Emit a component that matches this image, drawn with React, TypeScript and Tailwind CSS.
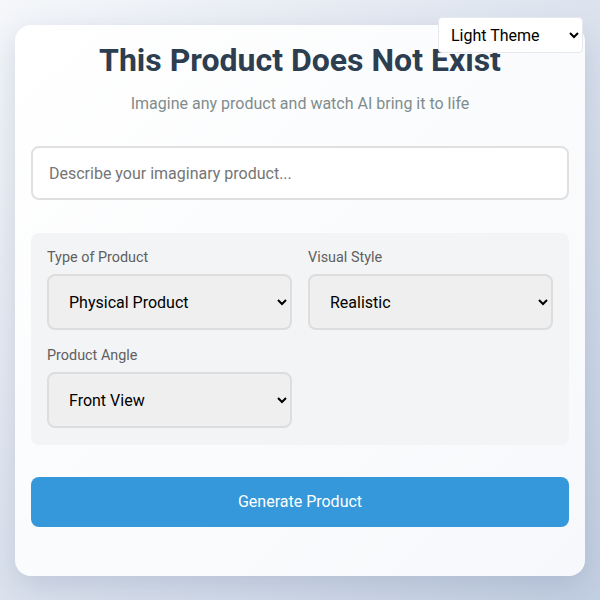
import React from "react";

const font = { fontFamily: "Roboto, 'Noto Sans', sans-serif" };

export default function App() {
  return (
    <div
      className="min-h-screen bg-gradient-to-br from-[#f5f7fa] to-[#c3cfe2] px-[15px] pt-[25px] pb-6"
      style={font}
    >
      <select
        className="fixed top-[17px] right-[17px] w-[145px] h-[36px] px-2 rounded bg-white border border-[#e6e8ee] text-base text-black"
        style={font}
        defaultValue="light"
      >
        <option value="light">Light Theme</option>
        <option value="dark">Dark Theme</option>
      </select>

      <div className="rounded-2xl bg-gradient-to-br from-white to-[#f6f8fb] shadow-[0_10px_30px_rgba(60,80,120,0.18)] px-4 pt-4 pb-[49px]">
        <h1 className="text-center text-[32px] leading-[38px] font-bold text-[#2c3e50] mb-[13px]">
          This Product Does Not Exist
        </h1>
        <p className="text-center text-base leading-6 text-[#7f8c8d] mb-[30px]">
          Imagine any product and watch AI bring it to life
        </p>

        <input
          type="text"
          placeholder="Describe your imaginary product..."
          className="w-full h-[54px] px-4 rounded-lg border-2 border-[#e0e0e0] bg-white text-base placeholder:text-[#757575] outline-none"
          style={font}
        />

        {/* Options panel */}
        <div className="mt-[33px] rounded-lg bg-[#f3f4f6] px-4 pt-4 pb-[17px] grid grid-cols-2 gap-x-4 gap-y-[17px]">
          <Field label="Type of Product" options={["Physical Product", "Digital Product", "Service"]} />
          <Field label="Visual Style" options={["Realistic", "Cartoon", "Minimalist"]} />
          <Field label="Product Angle" options={["Front View", "Side View", "Top View"]} />
        </div>

        <button
          className="mt-8 w-full h-[50px] rounded-lg bg-[#3498db] text-white text-base"
          style={font}
        >
          Generate Product
        </button>
      </div>
    </div>
  );
}

function Field({ label, options }: { label: string; options: string[] }) {
  return (
    <div className="flex flex-col">
      <label className="text-[14.4px] leading-[17px] text-[#5f5f5f] mb-2">{label}</label>
      <select
        className="h-14 px-4 rounded-lg border-2 border-[#dddddd] bg-[#efefef] text-base text-black"
        style={font}
      >
        {options.map((o) => (
          <option key={o}>{o}</option>
        ))}
      </select>
    </div>
  );
}
